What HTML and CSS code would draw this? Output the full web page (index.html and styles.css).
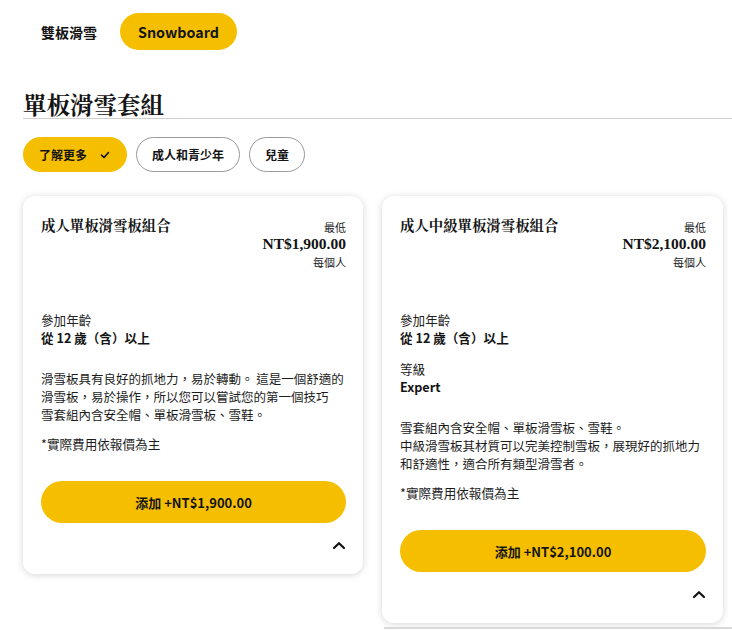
FILE: index.html
```html
<!DOCTYPE html>
<html lang="zh-Hant">
<head>
<meta charset="utf-8">
<title>單板滑雪套組</title>
<link rel="stylesheet" href="styles.css">
</head>
<body>
<div class="page">
  <nav class="tabs">
    <a class="tab">雙板滑雪</a>
    <a class="tab active">Snowboard</a>
  </nav>

  <h1 class="section-title">單板滑雪套組</h1>

  <div class="chips">
    <button class="chip selected">了解更多
      <svg class="check" width="10" height="8" viewBox="0 0 10 8"><path d="M1.5 4.2 L4 6.5 L8.5 1.5" fill="none" stroke="#111" stroke-width="1.6" stroke-linecap="round" stroke-linejoin="round"/></svg>
    </button>
    <button class="chip">成人和青少年</button>
    <button class="chip">兒童</button>
  </div>

  <div class="cards">
    <div class="col">
      <article class="card">
        <header class="card-head">
          <h2 class="card-title">成人單板滑雪板組合</h2>
          <div class="price">
            <div class="price-small">最低</div>
            <div class="price-big">NT$1,900.00</div>
            <div class="price-small">每個人</div>
          </div>
        </header>
        <div class="info">
          <div class="info-item">
            <div class="info-label">參加年齡</div>
            <div class="info-value">從 12 歲（含）以上</div>
          </div>
        </div>
        <p class="desc">滑雪板具有良好的抓地力，易於轉動。 這是一個舒適的滑雪板，易於操作，所以您可以嘗試您的第一個技巧<br>雪套組內含安全帽、單板滑雪板、雪鞋。</p>
        <p class="note">*實際費用依報價為主</p>
        <button class="add">添加 +NT$1,900.00</button>
        <div class="toggle">
          <svg width="14" height="9" viewBox="0 0 14 9"><path d="M2 7 L7 2.2 L12 7" fill="none" stroke="#111" stroke-width="2.2" stroke-linecap="round" stroke-linejoin="round"/></svg>
        </div>
      </article>
    </div>
    <div class="col">
      <article class="card">
        <header class="card-head">
          <h2 class="card-title">成人中級單板滑雪板組合</h2>
          <div class="price">
            <div class="price-small">最低</div>
            <div class="price-big">NT$2,100.00</div>
            <div class="price-small">每個人</div>
          </div>
        </header>
        <div class="info">
          <div class="info-item">
            <div class="info-label">參加年齡</div>
            <div class="info-value">從 12 歲（含）以上</div>
          </div>
          <div class="info-item">
            <div class="info-label">等級</div>
            <div class="info-value">Expert</div>
          </div>
        </div>
        <p class="desc">雪套組內含安全帽、單板滑雪板、雪鞋。<br>中級滑雪板其材質可以完美控制雪板，展現好的抓地力和舒適性，適合所有類型滑雪者。</p>
        <p class="note">*實際費用依報價為主</p>
        <button class="add">添加 +NT$2,100.00</button>
        <div class="toggle">
          <svg width="14" height="9" viewBox="0 0 14 9"><path d="M2 7 L7 2.2 L12 7" fill="none" stroke="#111" stroke-width="2.2" stroke-linecap="round" stroke-linejoin="round"/></svg>
        </div>
      </article>
      <div class="rule"></div>
    </div>
  </div>
</div>
</body>
</html>
```

FILE: styles.css
```css
* { box-sizing: border-box; }

html, body {
  margin: 0;
  padding: 0;
  background: #ffffff;
}

body {
  font-family: "Noto Sans CJK TC", "Noto Sans", sans-serif;
  color: #141414;
  overflow: hidden;
}

.page {
  padding: 13px 0 0 23px;
}

.tabs {
  display: flex;
  gap: 5px;
}

.tab {
  display: flex;
  align-items: center;
  height: 37px;
  padding: 0 18px;
  border-radius: 19px;
  font-size: 14px;
  font-weight: 700;
  color: #141414;
}

.tab.active {
  background: #f5bf00;
  font-size: 14.3px;
}

.section-title {
  margin: 40px 0 0 0;
  height: 29px;
  line-height: 28px;
  font-family: "Noto Serif CJK TC", "Liberation Serif", serif;
  font-size: 23.5px;
  font-weight: 700;
  border-bottom: 1px solid #cfcfcf;
}

.chips {
  display: flex;
  gap: 9px;
  margin-top: 18px;
}

.chip {
  display: flex;
  align-items: center;
  height: 35px;
  padding: 0 15px;
  border: 1px solid #9a9a9a;
  border-radius: 18px;
  background: #fff;
  font-family: inherit;
  font-size: 12px;
  font-weight: 700;
  color: #141414;
}

.chip.selected {
  background: #f5bf00;
  border-color: #f5bf00;
  padding-right: 16px;
}

.check {
  margin-left: 13px;
}

.cards {
  display: grid;
  grid-template-columns: 340px 341px;
  gap: 19px;
  margin-top: 24px;
  align-items: start;
}

.card {
  background: #fff;
  border-radius: 12px;
  box-shadow: 0 1px 7px rgba(0, 0, 0, 0.17);
  padding: 18px 17px 17px 18px;
}

.card-head {
  display: flex;
  justify-content: space-between;
  align-items: flex-start;
}

.card-title {
  margin: 0;
  font-family: "Noto Serif CJK TC", "Liberation Serif", serif;
  font-size: 14.4px;
  font-weight: 700;
  line-height: 22px;
}

.price {
  text-align: right;
  margin-top: 5px;
}

.price-small {
  font-size: 11px;
  line-height: 16px;
  color: #222;
}

.price-small + .price-big + .price-small {
  line-height: 19px;
}

.price-big {
  font-family: "Liberation Serif", "Noto Serif CJK TC", serif;
  font-size: 15.5px;
  font-weight: 700;
  line-height: 18px;
}

.info {
  display: flex;
  flex-direction: column;
  gap: 14px;
  margin-top: 39px;
}

.info-label {
  font-size: 12.6px;
  line-height: 18px;
  color: #222;
}

.info-value {
  font-size: 12.6px;
  line-height: 17px;
  font-weight: 700;
}

.desc {
  margin: 24px 0 0 0;
  font-size: 12.5px;
  line-height: 18px;
  color: #1c1c1c;
}

.note {
  margin: 11px 0 0 0;
  font-size: 12.6px;
  line-height: 18px;
  color: #1c1c1c;
}

.add {
  display: block;
  width: 100%;
  height: 42px;
  margin-top: 28px;
  border: none;
  border-radius: 21px;
  background: #f5bf00;
  font-family: inherit;
  font-size: 13px;
  font-weight: 700;
  color: #141414;
}

.toggle {
  display: flex;
  justify-content: flex-end;
  align-items: center;
  height: 24px;
  margin-top: 10px;
}

.rule {
  height: 2px;
  margin: 4px -9px 0 2px;
  background: #d8d8d8;
}
```
